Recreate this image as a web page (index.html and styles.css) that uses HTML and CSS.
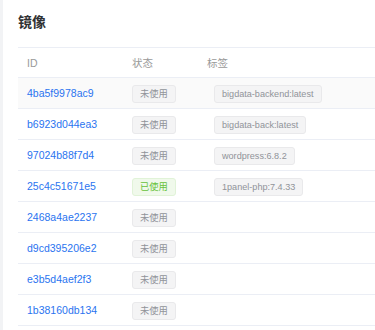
FILE: index.html
```html
<!DOCTYPE html>
<html lang="zh-CN">
<head>
  <meta charset="UTF-8" />
  <meta name="viewport" content="width=device-width, initial-scale=1">
  <title>镜像</title>
  <link rel="stylesheet" href="styles.css">
</head>
<body>
  <div class="panel">
    <h3 class="title">镜像</h3>
    <div class="table">
      <div class="row head">
        <span>ID</span>
        <span>状态</span>
        <span>标签</span>
      </div>
      <div class="row hover">
        <a class="id">4ba5f9978ac9</a>
        <span><i class="tag">未使用</i></span>
        <span><i class="tag label">bigdata-backend:latest</i></span>
      </div>
      <div class="row">
        <a class="id">b6923d044ea3</a>
        <span><i class="tag">未使用</i></span>
        <span><i class="tag label">bigdata-back:latest</i></span>
      </div>
      <div class="row">
        <a class="id">97024b88f7d4</a>
        <span><i class="tag">未使用</i></span>
        <span><i class="tag label">wordpress:6.8.2</i></span>
      </div>
      <div class="row">
        <a class="id">25c4c51671e5</a>
        <span><i class="tag used">已使用</i></span>
        <span><i class="tag label">1panel-php:7.4.33</i></span>
      </div>
      <div class="row">
        <a class="id">2468a4ae2237</a>
        <span><i class="tag">未使用</i></span>
        <span></span>
      </div>
      <div class="row">
        <a class="id">d9cd395206e2</a>
        <span><i class="tag">未使用</i></span>
        <span></span>
      </div>
      <div class="row">
        <a class="id">e3b5d4aef2f3</a>
        <span><i class="tag">未使用</i></span>
        <span></span>
      </div>
      <div class="row">
        <a class="id">1b38160db134</a>
        <span><i class="tag">未使用</i></span>
        <span></span>
      </div>
    </div>
  </div>
</body>
</html>
```

FILE: styles.css
```css
/* ページ全体 */
*, *::before, *::after { box-sizing: border-box; }
body {
  margin: 0;
  background: #f2f3f5;
  font-family: 'Liberation Sans', 'Noto Sans CJK SC', sans-serif;
  color: #303133;
  height: 330px;
  overflow: hidden;
}
.panel {
  margin-left: 3px;
  background: #fff;
  padding: 13px 0 0 15px;
  height: 100%;
}
.title {
  margin: 0 0 16px;
  font-size: 14px;
  line-height: 18px;
  font-weight: 700;
  color: #303133;
}

/* テーブル */
.table { border-top: 1px solid #ebeef5; }
.row {
  display: grid;
  grid-template-columns: 105px 75px 1fr;
  align-items: center;
  height: 31px;
  padding-left: 9px;
  border-bottom: 1px solid #ebeef5;
  white-space: nowrap;
}
.row.head {
  height: 30px;
  font-size: 10.5px;
  color: #999;
}
.row.hover { background: #fafafa; }
.id {
  font-size: 10.5px;
  color: #2a74f0;
  cursor: pointer;
}

/* タグ */
.tag {
  display: inline-block;
  height: 18px;
  line-height: 16px;
  padding: 0 7px;
  font-style: normal;
  font-size: 9.3px;
  color: #909399;
  background: #f4f4f5;
  border: 1px solid #e9e9eb;
  border-radius: 3px;
}
.tag.used {
  color: #67c23a;
  background: #f0f9eb;
  border-color: #e1f3d8;
}
.tag.label {
  margin-left: 7px;
  padding: 0 7px;
  font-size: 9.1px;
}
```
